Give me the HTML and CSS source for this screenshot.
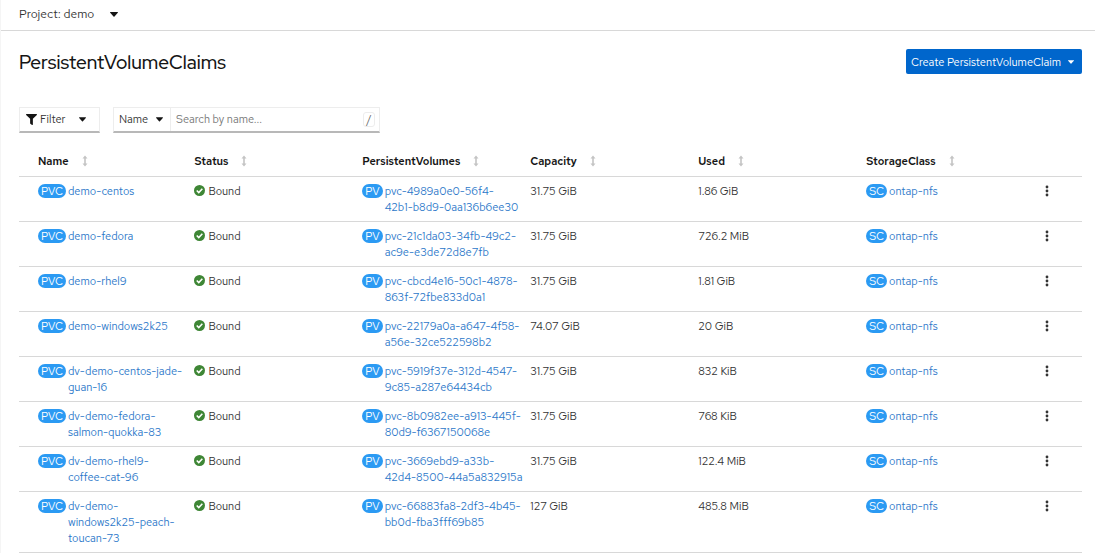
FILE: index.html
```html
<!DOCTYPE html>
<html lang="en">

  <head>
    <meta charset="UTF-8">
    <meta name="viewport" content="width=device-width, initial-scale=1.0">
    <title>PersistentVolumeClaims</title>
    <link rel="stylesheet" href="styles.css">
  </head>

  <body>
    <!-- shared icons -->
    <svg class="icon-defs" aria-hidden="true">
      <symbol id="caret" viewBox="0 0 8 5">
        <path d="M.5 0h7q.8.1.3.7L4.5 4.6q-.5.5-1 0L.2.7Q-.3.1.5 0z" fill="currentColor" />
      </symbol>
      <symbol id="funnel" viewBox="0 0 512 512">
        <path fill="currentColor"
          d="M488 0H24C3 0-8 26 7 41l185 185v206c0 8 4 15 10 20l80 56c16 11 38 0 38-20V226L505 41c15-15 4-41-17-41z" />
      </symbol>
      <symbol id="sort" viewBox="0 0 6 12">
        <path fill="currentColor" d="M3 .5l2.5 3H3.8v5h1.7L3 11.5.5 8.5h1.7v-5H.5z" />
      </symbol>
      <symbol id="check" viewBox="0 0 12 12">
        <circle cx="6" cy="6" r="6" fill="#3e8635" />
        <path d="M3 6l2.2 2.3L9.1 4.1" fill="none" stroke="#fff" stroke-width="1.7" />
      </symbol>
      <symbol id="kebab" viewBox="0 0 4 12">
        <circle cx="2" cy="2" r="1.4" fill="currentColor" />
        <circle cx="2" cy="6" r="1.4" fill="currentColor" />
        <circle cx="2" cy="10" r="1.4" fill="currentColor" />
      </symbol>
    </svg>

    <div class="project-bar">
      <button class="project-toggle">Project: demo <svg class="caret"><use href="#caret" /></svg></button>
    </div>

    <main>
      <header class="page-header">
        <h1>PersistentVolumeClaims</h1>
        <button class="create-btn">Create PersistentVolumeClaim <svg class="caret"><use href="#caret" /></svg></button>
      </header>

      <div class="toolbar">
        <button class="filter-btn"><svg class="funnel"><use href="#funnel" /></svg>Filter <svg class="caret"><use href="#caret" /></svg></button>
        <div class="search-group">
          <button class="search-type">Name <svg class="caret"><use href="#caret" /></svg></button>
          <input type="text" placeholder="Search by name..." aria-label="Search by name">
          <kbd>/</kbd>
        </div>
      </div>

      <table>
        <thead>
          <tr>
            <th class="col-name"><button>Name <svg class="sort"><use href="#sort" /></svg></button></th>
            <th><button>Status <svg class="sort"><use href="#sort" /></svg></button></th>
            <th><button>PersistentVolumes <svg class="sort"><use href="#sort" /></svg></button></th>
            <th><button>Capacity <svg class="sort"><use href="#sort" /></svg></button></th>
            <th><button>Used <svg class="sort"><use href="#sort" /></svg></button></th>
            <th><button>StorageClass <svg class="sort"><use href="#sort" /></svg></button></th>
            <th class="col-actions"></th>
          </tr>
        </thead>
        <tbody>
          <tr>
            <td><div class="resource"><span class="badge">PVC</span><a href="#">demo-centos</a></div></td>
            <td><div class="status"><svg><use href="#check" /></svg>Bound</div></td>
            <td><div class="resource"><span class="badge">PV</span><a href="#">pvc-4989a0e0-56f4-<br>42b1-b8d9-0aa136b6ee30</a></div></td>
            <td>31.75 GiB</td>
            <td>1.86 GiB</td>
            <td><div class="resource"><span class="badge">SC</span><a href="#">ontap-nfs</a></div></td>
            <td><button class="kebab" aria-label="Actions"><svg><use href="#kebab" /></svg></button></td>
          </tr>
          <tr>
            <td><div class="resource"><span class="badge">PVC</span><a href="#">demo-fedora</a></div></td>
            <td><div class="status"><svg><use href="#check" /></svg>Bound</div></td>
            <td><div class="resource"><span class="badge">PV</span><a href="#">pvc-21c1da03-34fb-49c2-<br>ac9e-e3de72d8e7fb</a></div></td>
            <td>31.75 GiB</td>
            <td>726.2 MiB</td>
            <td><div class="resource"><span class="badge">SC</span><a href="#">ontap-nfs</a></div></td>
            <td><button class="kebab" aria-label="Actions"><svg><use href="#kebab" /></svg></button></td>
          </tr>
          <tr>
            <td><div class="resource"><span class="badge">PVC</span><a href="#">demo-rhel9</a></div></td>
            <td><div class="status"><svg><use href="#check" /></svg>Bound</div></td>
            <td><div class="resource"><span class="badge">PV</span><a href="#">pvc-cbcd4e16-50c1-4878-<br>863f-72fbe833d0a1</a></div></td>
            <td>31.75 GiB</td>
            <td>1.81 GiB</td>
            <td><div class="resource"><span class="badge">SC</span><a href="#">ontap-nfs</a></div></td>
            <td><button class="kebab" aria-label="Actions"><svg><use href="#kebab" /></svg></button></td>
          </tr>
          <tr>
            <td><div class="resource"><span class="badge">PVC</span><a href="#">demo-windows2k25</a></div></td>
            <td><div class="status"><svg><use href="#check" /></svg>Bound</div></td>
            <td><div class="resource"><span class="badge">PV</span><a href="#">pvc-22179a0a-a647-4f58-<br>a56e-32ce522598b2</a></div></td>
            <td>74.07 GiB</td>
            <td>20 GiB</td>
            <td><div class="resource"><span class="badge">SC</span><a href="#">ontap-nfs</a></div></td>
            <td><button class="kebab" aria-label="Actions"><svg><use href="#kebab" /></svg></button></td>
          </tr>
          <tr>
            <td><div class="resource"><span class="badge">PVC</span><a href="#">dv-demo-centos-jade-<br>guan-16</a></div></td>
            <td><div class="status"><svg><use href="#check" /></svg>Bound</div></td>
            <td><div class="resource"><span class="badge">PV</span><a href="#">pvc-5919f37e-312d-4547-<br>9c85-a287e64434cb</a></div></td>
            <td>31.75 GiB</td>
            <td>832 KiB</td>
            <td><div class="resource"><span class="badge">SC</span><a href="#">ontap-nfs</a></div></td>
            <td><button class="kebab" aria-label="Actions"><svg><use href="#kebab" /></svg></button></td>
          </tr>
          <tr>
            <td><div class="resource"><span class="badge">PVC</span><a href="#">dv-demo-fedora-<br>salmon-quokka-83</a></div></td>
            <td><div class="status"><svg><use href="#check" /></svg>Bound</div></td>
            <td><div class="resource"><span class="badge">PV</span><a href="#">pvc-8b0982ee-a913-445f-<br>80d9-f6367150068e</a></div></td>
            <td>31.75 GiB</td>
            <td>768 KiB</td>
            <td><div class="resource"><span class="badge">SC</span><a href="#">ontap-nfs</a></div></td>
            <td><button class="kebab" aria-label="Actions"><svg><use href="#kebab" /></svg></button></td>
          </tr>
          <tr>
            <td><div class="resource"><span class="badge">PVC</span><a href="#">dv-demo-rhel9-<br>coffee-cat-96</a></div></td>
            <td><div class="status"><svg><use href="#check" /></svg>Bound</div></td>
            <td><div class="resource"><span class="badge">PV</span><a href="#">pvc-3669ebd9-a33b-<br>42d4-8500-44a5a832915a</a></div></td>
            <td>31.75 GiB</td>
            <td>122.4 MiB</td>
            <td><div class="resource"><span class="badge">SC</span><a href="#">ontap-nfs</a></div></td>
            <td><button class="kebab" aria-label="Actions"><svg><use href="#kebab" /></svg></button></td>
          </tr>
          <tr>
            <td><div class="resource"><span class="badge">PVC</span><a href="#">dv-demo-<br>windows2k25-peach-<br>toucan-73</a></div></td>
            <td><div class="status"><svg><use href="#check" /></svg>Bound</div></td>
            <td><div class="resource"><span class="badge">PV</span><a href="#">pvc-66883fa8-2df3-4b45-<br>bb0d-fba3fff69b85</a></div></td>
            <td>127 GiB</td>
            <td>485.8 MiB</td>
            <td><div class="resource"><span class="badge">SC</span><a href="#">ontap-nfs</a></div></td>
            <td><button class="kebab" aria-label="Actions"><svg><use href="#kebab" /></svg></button></td>
          </tr>
        </tbody>
      </table>
    </main>
  </body>

</html>
```
FILE: styles.css
```css
* {
  box-sizing: border-box;
}

body {
  margin: 0;
  background: #fff;
  color: #333;
  font-family: "Red Hat Text", Roboto, sans-serif;
  font-size: 11px;
  line-height: 16px;
  border-left: 1px solid #f5f5f5;
}

button {
  display: flex;
  align-items: center;
  padding: 0;
  border: 0;
  background: none;
  color: inherit;
  font: inherit;
  white-space: nowrap;
  cursor: pointer;
}

a {
  color: #2b77c9;
  text-decoration: none;
}

.icon-defs {
  display: none;
}

.caret {
  flex-shrink: 0;
  width: 8px;
  height: 5px;
  color: #151515;
}

.project-bar {
  padding: 6px 18px 8px;
  border-bottom: 1px solid #d8d8d8;
}

.project-toggle {
  gap: 16px;
  font-size: 12px;
}

main {
  padding: 18px 13px 0 18px;
}

.page-header {
  display: flex;
  justify-content: space-between;
  align-items: flex-start;
}

h1 {
  margin: 0;
  color: #151515;
  font-family: "Red Hat Display", "Red Hat Text", Roboto, sans-serif;
  font-size: 19px;
  font-weight: 500;
  line-height: 28px;
}

.create-btn {
  gap: 7px;
  height: 25px;
  padding: 0 8px 0 5px;
  border-radius: 2px;
  background: #0066cc;
  color: #fff;
}

.create-btn .caret {
  width: 6px;
  height: 4px;
  color: #fff;
}

.toolbar {
  display: flex;
  gap: 13px;
  margin-top: 30px;
}

.filter-btn,
.search-group {
  height: 26px;
  border: 1px solid #ededed;
  border-bottom: 2px solid #b8b8b8;
}

.filter-btn {
  width: 81px;
  padding: 0 13px 1px 6px;
}

.filter-btn .caret,
.search-type .caret {
  width: 7px;
  margin-left: auto;
}

.funnel {
  width: 11px;
  height: 11px;
  margin-right: 3px;
  color: #151515;
}

.search-group {
  display: flex;
  align-items: center;
  width: 267px;
  padding-right: 4px;
}

.search-type {
  width: 57px;
  height: 23px;
  padding: 0 7px 1px 5px;
  border-right: 1px solid #ededed;
}

.search-group input {
  flex: 1;
  min-width: 0;
  padding: 0 5px 1px;
  border: 0;
  outline: 0;
  font: inherit;
}

.search-group input::placeholder {
  color: #777;
}

kbd {
  width: 12px;
  border: 1px solid #ededed;
  border-radius: 3px;
  color: #666;
  font: inherit;
  line-height: 13px;
  text-align: center;
}

table {
  width: 100%;
  margin-top: 14px;
  border-collapse: collapse;
  table-layout: fixed;
}

th,
td {
  width: 15.8%;
  padding: 6px 0;
  border-bottom: 1px solid #d8d8d8;
  text-align: left;
  vertical-align: top;
}

th {
  height: 29px;
  color: #151515;
  font-weight: 600;
}

th button {
  gap: 13px;
}

th:first-child,
td:first-child {
  padding-left: 19px;
}

.col-name {
  width: 16.5%;
}

.col-actions {
  width: 4.5%;
}

.sort {
  width: 6px;
  height: 12px;
  color: #c4c4c4;
}

tbody tr {
  height: 45px;
}

.resource {
  display: flex;
  align-items: flex-start;
  gap: 2px;
  white-space: nowrap;
}

.badge {
  margin-top: 1px;
  padding: 0 3px;
  border-radius: 7px;
  background: #2b9af3;
  color: #fff;
  line-height: 14px;
}

.status {
  display: flex;
  align-items: center;
  gap: 3px;
}

.status svg {
  width: 11px;
  height: 11px;
}

.kebab {
  width: 26px;
  height: 16px;
  justify-content: center;
}

.kebab svg {
  width: 4px;
  height: 12px;
}
```
